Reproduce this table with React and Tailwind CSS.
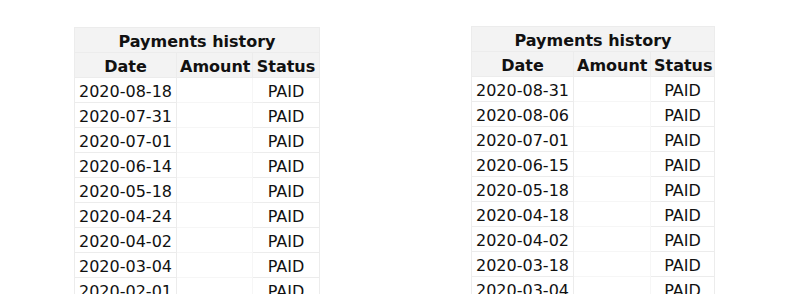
import React from "react";

const left = ["2020-08-18","2020-07-31","2020-07-01","2020-06-14","2020-05-18","2020-04-24","2020-04-02","2020-03-04","2020-02-01","2020-01-15"];
const right = ["2020-08-31","2020-08-06","2020-07-01","2020-06-15","2020-05-18","2020-04-18","2020-04-02","2020-03-18","2020-03-04","2020-02-18"];

function Table({ dates, widths, tw }) {
  const cell = "border border-[#ececec] px-[3px] pt-[5px] pb-[1px] leading-[18px] whitespace-nowrap";
  return (
    <table className={`border-collapse table-fixed text-[16px] text-[#111] ${tw}`} style={{ fontFamily: '"DejaVu Sans", Verdana, sans-serif' }}>
      <colgroup>
        <col className={widths[0]} />
        <col className={widths[1]} />
        <col className={widths[2]} />
      </colgroup>
      <thead>
        <tr className="bg-[#f3f3f3]">
          <th colSpan={3} className={`${cell} font-bold text-center`}>Payments history</th>
        </tr>
        <tr className="bg-[#f3f3f3]">
          <th className={`${cell} font-bold text-center`}>Date</th>
          <th className={`${cell} font-bold text-center`}>Amount</th>
          <th className={`${cell} font-bold text-center`}>Status</th>
        </tr>
      </thead>
      <tbody>
        {dates.map((d, i) => (
          <tr key={i} className="bg-white">
            <td className={`${cell} text-left pl-[4px]`}>{d}</td>
            <td className={`${cell} border-[#f6f6f6]`}></td>
            <td className={`${cell} text-center`}>PAID</td>
          </tr>
        ))}
      </tbody>
    </table>
  );
}

export default function App() {
  return (
    <div className="w-[794px] h-[294px] overflow-hidden bg-white flex">
      <div className="w-[397px] pl-[74px] pt-[27px]">
        <Table dates={left} tw="w-[245px]" widths={["w-[102px]", "w-[76px]", "w-[67px]"]} />
      </div>
      <div className="w-[397px] pl-[74px] pt-[26px]">
        <Table dates={right} tw="w-[243px]" widths={["w-[102px]", "w-[77px]", "w-[64px]"]} />
      </div>
    </div>
  );
}
